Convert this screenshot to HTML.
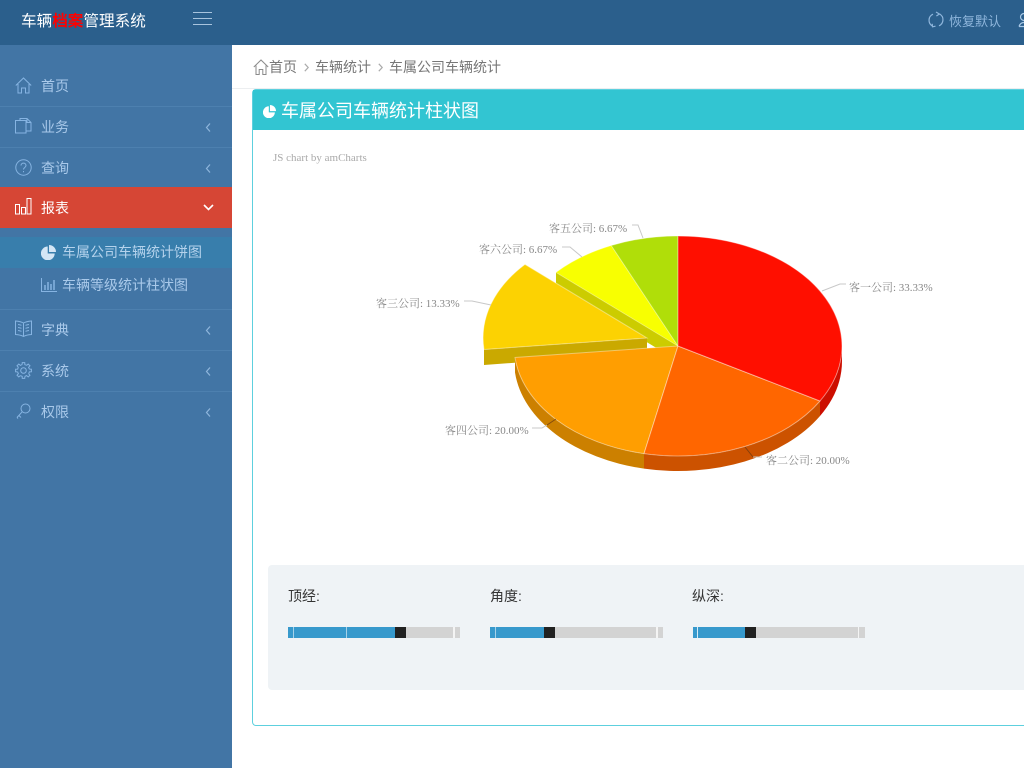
<!DOCTYPE html>
<html lang="zh">
<head>
<meta charset="utf-8">
<title>车辆档案管理系统</title>
<style>
*{box-sizing:border-box}
html,body{margin:0;padding:0;width:1024px;height:768px;overflow:hidden;background:#fff;font-family:"Liberation Sans","WenQuanYi Zen Hei","Noto Sans CJK SC",sans-serif}
.abs{position:absolute;white-space:nowrap}
#top{left:0;top:0;width:1024px;height:45px;background:#2b5f8c}
#side{left:0;top:45px;width:232px;height:723px;background:#4275a5}
.sep{position:absolute;left:0;width:232px;height:1px;background:#4d80af}
.mi{position:absolute;left:41px;font-size:14px;line-height:20px;color:#a9c9ea}
.chev{position:absolute;left:205px}
.ic{position:absolute;fill:none;stroke:#86b4e2;stroke-width:1}
#box{left:252px;top:89px;width:900px;height:637px;border:1px solid #5dd0de;border-radius:4px;background:#fff}
#head{left:253px;top:90px;width:800px;height:40px;background:#32c5d2}
#panel{left:268px;top:565px;width:800px;height:125px;background:#eff3f6;border-radius:4px}
.sl{position:absolute;top:627px;height:11px;background:#d3d3d3}
.sl i{position:absolute;top:0;height:11px;display:block}
.lab{position:absolute;top:586px;font-size:14px;line-height:20px;color:#333}
</style>
</head>
<body>
<div class="abs" id="top"></div>
<div class="abs" style="left:21px;top:12px;font-size:15.6px;line-height:20px;color:#fff">车辆<span style="color:#f00;font-weight:bold">档案</span>管理系统</div>
<div class="abs" style="left:193px;top:12px;width:19px;height:1px;background:#a8c4de"></div>
<div class="abs" style="left:193px;top:18px;width:19px;height:1px;background:#a8c4de"></div>
<div class="abs" style="left:193px;top:24px;width:19px;height:1px;background:#a8c4de"></div>
<svg class="abs" style="left:927px;top:11px" width="18" height="18" viewBox="0 0 18 18" fill="none" stroke="#8fb6dc" stroke-width="1.2"><path d="M6 3.2A6.6 6.6 0 0 0 5.4 15M12 14.8A6.6 6.6 0 0 0 12.6 3"/><path d="M9 1l3.4 2-3 2M5.2 12.8l.3 3 3-.6"/></svg>
<div class="abs" style="left:949px;top:13px;font-size:13px;line-height:18px;color:#8fb6dc">恢复默认</div>
<svg class="abs" style="left:1018px;top:12px" width="10" height="18" viewBox="0 0 10 18" fill="none" stroke="#a8c8e6" stroke-width="1.2"><circle cx="6" cy="5" r="3.5"/><path d="M1 14.5c1-3 3-4 5-4M1 14.500h9"/></svg>

<div class="abs" id="side"></div>
<div class="abs" style="left:0;top:187px;width:232px;height:41px;background:#d64635"></div>
<div class="abs" style="left:0;top:237px;width:232px;height:31px;background:#387eac"></div>
<div class="sep" style="top:106px"></div>
<div class="sep" style="top:147px"></div>
<div class="sep" style="top:309px"></div>
<div class="sep" style="top:350px"></div>
<div class="sep" style="top:391px"></div>

<svg class="ic" style="left:15px;top:77px" width="17" height="17" viewBox="0 0 17 17"><path d="M.8 8.500L8.500 1l7.700 7.500M3 7v9h3.500v-5h4v5H14V7"/></svg>
<div class="mi" style="top:76px">首页</div>

<svg class="ic" style="left:15px;top:118px" width="17" height="17" viewBox="0 0 17 17"><path d="M.5 2.500h10.500v12.500H.5zM5 2.500V.5h7l4 4v8.500h-5M12 .5v4h4"/></svg>
<div class="mi" style="top:117px">业务</div>
<svg class="chev" style="top:123px" width="7" height="9" viewBox="0 0 7 9" fill="none" stroke="#8fb6dc" stroke-width="1.2"><path d="M5 .5L1.500 4.500 5 8.500"/></svg>

<svg class="ic" style="left:15px;top:159px" width="17" height="17" viewBox="0 0 17 17"><circle cx="8.500" cy="8.500" r="7.700"/><path d="M6 6.500c0-3.200 5-3.200 5 0 0 2-2.500 2-2.500 4M8.500 12v1.200"/></svg>
<div class="mi" style="top:158px">查询</div>
<svg class="chev" style="top:164px" width="7" height="9" viewBox="0 0 7 9" fill="none" stroke="#8fb6dc" stroke-width="1.2"><path d="M5 .5L1.500 4.500 5 8.500"/></svg>

<svg class="ic" style="left:15px;top:198px;stroke:#fff" width="17" height="17" viewBox="0 0 17 17"><path d="M.5 6.500h4v9.500h-4zM6.500 9.500h4V16h-4zM12 .5h4V16h-4z"/></svg>
<div class="mi" style="top:198px;color:#fff">报表</div>
<svg class="abs" style="left:203px;top:204px" width="11" height="7" viewBox="0 0 11 7" fill="none" stroke="#fff" stroke-width="1.600"><path d="M1 1l4.500 4.500L10 1"/></svg>

<svg class="abs" style="left:41px;top:245px" width="15" height="15" viewBox="0 0 15 15"><path fill="#d4e6f5" d="M6.700 1.500v7h7A6.900 6.900 0 1 1 6.700 1.500zM8 0a7 7 0 0 1 7 7H8z"/></svg>
<div class="mi" style="left:62px;top:242px;color:#b4d2ec">车属公司车辆统计饼图</div>
<svg class="abs" style="left:41px;top:278px" width="16" height="14" viewBox="0 0 16 14" fill="none" stroke="#86b4e2"><path d="M.5 0v13.500H16"/><path stroke-width="1.500" d="M4 12V7M7 12V4M10 12V6M13 12V2"/></svg>
<div class="mi" style="left:62px;top:275px;color:#a9c9ea">车辆等级统计柱状图</div>

<svg class="ic" style="left:15px;top:320px" width="17" height="17" viewBox="0 0 17 17"><path d="M8.500 3C6 1.500 3 1.200.5 1v13.500c3 .2 5.500.5 8 2 2.500-1.500 5-1.800 8-2V1c-2.500.2-5.500.5-8 2zM8.500 3v13.500M3 4.500c1 0 2 .3 3.500.8M3 7.500c1 0 2 .3 3.500.8M3 10.500c1 0 2 .3 3.500.8M14 4.500c-1 0-2 .3-3.500.8M14 7.500c-1 0-2 .3-3.500.8M14 10.500c-1 0-2 .3-3.500.8"/></svg>
<div class="mi" style="top:320px">字典</div>
<svg class="chev" style="top:326px" width="7" height="9" viewBox="0 0 7 9" fill="none" stroke="#8fb6dc" stroke-width="1.2"><path d="M5 .5L1.500 4.500 5 8.500"/></svg>

<svg class="ic" style="left:15px;top:362px" width="17" height="17" viewBox="0 0 17 17"><circle cx="8.500" cy="8.500" r="2.800"/>
<g><path id="t" d="M14.350 7.150L16.400 7.250V9.750L14.350 9.850A6 6 0 0 1 13.590 11.680"/>
<path transform="rotate(45 8.500 8.500)" d="M14.350 7.150L16.400 7.250V9.750L14.350 9.850A6 6 0 0 1 13.590 11.680"/>
<path transform="rotate(90 8.500 8.500)" d="M14.350 7.150L16.400 7.250V9.750L14.350 9.850A6 6 0 0 1 13.590 11.680"/>
<path transform="rotate(135 8.500 8.500)" d="M14.350 7.150L16.400 7.250V9.750L14.350 9.850A6 6 0 0 1 13.590 11.680"/>
<path transform="rotate(180 8.500 8.500)" d="M14.350 7.150L16.400 7.250V9.750L14.350 9.850A6 6 0 0 1 13.590 11.680"/>
<path transform="rotate(225 8.500 8.500)" d="M14.350 7.150L16.400 7.250V9.750L14.350 9.850A6 6 0 0 1 13.590 11.680"/>
<path transform="rotate(270 8.500 8.500)" d="M14.350 7.150L16.400 7.250V9.750L14.350 9.850A6 6 0 0 1 13.590 11.680"/>
<path transform="rotate(315 8.500 8.500)" d="M14.350 7.150L16.400 7.250V9.750L14.350 9.850A6 6 0 0 1 13.590 11.680"/></g></svg>
<div class="mi" style="top:361px">系统</div>
<svg class="chev" style="top:367px" width="7" height="9" viewBox="0 0 7 9" fill="none" stroke="#8fb6dc" stroke-width="1.2"><path d="M5 .5L1.500 4.500 5 8.500"/></svg>

<svg class="ic" style="left:16px;top:403px" width="16" height="17" viewBox="0 0 16 17"><circle cx="9.500" cy="5.500" r="4.500"/><path d="M6.300 8.700L1 14.500M3 12.500l2 2M1 14.500l1 1"/></svg>
<div class="mi" style="top:402px">权限</div>
<svg class="chev" style="top:408px" width="7" height="9" viewBox="0 0 7 9" fill="none" stroke="#8fb6dc" stroke-width="1.2"><path d="M5 .5L1.500 4.500 5 8.500"/></svg>

<div class="abs" style="left:232px;top:88px;width:792px;height:1px;background:#eceef0"></div>
<svg class="abs" style="left:253px;top:59px" width="16" height="16" viewBox="0 0 16 16" fill="none" stroke="#8a8a8a"><path d="M.8 8L8 1l7.200 7M3 6.500v9h3.200v-5h3.600v5H13v-9"/></svg>
<div class="abs" style="left:269px;top:57px;font-size:14px;line-height:20px;color:#777">首页</div>
<svg class="abs" style="left:304px;top:63px" width="5" height="9" viewBox="0 0 5 9" fill="none" stroke="#aaa" stroke-width="1.200"><path d="M.8.800l3.400 3.700-3.400 3.700"/></svg>
<div class="abs" style="left:315px;top:57px;font-size:14px;line-height:20px;color:#777">车辆统计</div>
<svg class="abs" style="left:378px;top:63px" width="5" height="9" viewBox="0 0 5 9" fill="none" stroke="#aaa" stroke-width="1.200"><path d="M.8.800l3.400 3.700-3.400 3.700"/></svg>
<div class="abs" style="left:389px;top:57px;font-size:14px;line-height:20px;color:#777">车属公司车辆统计</div>

<div class="abs" id="box"></div>
<div class="abs" id="head"></div>
<svg class="abs" style="left:263px;top:105px" width="13" height="13" viewBox="0 0 15 15"><path fill="#fff" d="M6.700 1.500v7h7A6.900 6.900 0 1 1 6.700 1.500zM8 0a7 7 0 0 1 7 7H8z"/></svg>
<div class="abs" style="left:281px;top:99px;font-size:18px;line-height:24px;color:#fff">车属公司车辆统计柱状图</div>
<div class="abs" style="left:273px;top:151px;font:11px/14px 'Liberation Serif',serif;color:#aaa">JS chart by amCharts</div>

<svg class="abs" style="left:0;top:0" width="1024" height="768" viewBox="0 0 1024 768">
<!-- yellow -->
<path fill="#cccc00" d="M556 272.400L678 346V361L556 287.400Z"/>
<path fill="#f8ff01" stroke="#fff" stroke-opacity=".3" d="M678 346L556 272.400A164 110 0 0 1 611.300 245.500Z"/>
<!-- lime -->
<path fill="#b0de09" stroke="#fff" stroke-opacity=".3" d="M678 346L611.300 245.500A164 110 0 0 1 678 236Z"/>
<!-- gold -->
<path fill="#caa900" d="M647 338L484 349.500V365L647 353Z"/>
<path fill="#fcd202" stroke="#fff" stroke-opacity=".4" d="M647 338L484 349.500A164 110 0 0 1 525 264.400Z"/>
<!-- walls -->
<path fill="#cc8000" d="M515 357.500A164 110 0 0 0 644 453.600V468.600A164 110 0 0 1 515 372.500Z"/>
<path fill="#cc5200" d="M644 453.600A164 110 0 0 0 820 401V416A164 110 0 0 1 644 468.600Z"/>
<path fill="#cc0e00" d="M820 401A164 110 0 0 0 842 346V361A164 110 0 0 1 820 416Z"/>
<!-- tops -->
<path fill="#ff9e01" stroke="#fff" stroke-opacity=".4" d="M678 346L644 453.600A164 110 0 0 1 515 357.500Z"/>
<path fill="#ff6600" stroke="#fff" stroke-opacity=".4" d="M678 346L820 401A164 110 0 0 1 644 453.600Z"/>
<path fill="#ff0f00" stroke="#fff" stroke-opacity=".4" d="M678 346V236A164 110 0 0 1 820 401Z"/>
<!-- leader lines -->
<g fill="none" stroke="#c8c8c8">
<path d="M822 291L840 284H846M753 457H762"/>
<path d="M547 425L542 428H532M491 305L472 301H464M582 257L570 247H562M643 238L638 225H632"/>
</g>
<path fill="none" stroke="#6b3a12" stroke-opacity=".75" d="M745 447L753 457M556 419L547 425"/>
<g font-family="'Liberation Serif','WenQuanYi Zen Hei','Noto Serif CJK SC',serif" font-size="11" fill="#888">
<text x="849" y="291">客一公司: 33.33%</text>
<text x="766" y="464">客二公司: 20.00%</text>
<text x="445" y="434">客四公司: 20.00%</text>
<text x="376" y="307">客三公司: 13.33%</text>
<text x="479" y="253">客六公司: 6.67%</text>
<text x="549" y="232">客五公司: 6.67%</text>
</g>
</svg>

<div class="abs" id="panel"></div>
<div class="lab" style="left:288px">顶经:</div>
<div class="lab" style="left:490px">角度:</div>
<div class="lab" style="left:692px">纵深:</div>

<div class="sl" style="left:288px;width:172px">
<i style="left:0;width:107px;background:#3799cc"></i>
<i style="left:5px;width:1px;background:#a6d2ea"></i>
<i style="left:58px;width:1px;background:#a6d2ea"></i>
<i style="left:107px;width:11px;background:#212121"></i>
<i style="left:165px;width:2px;background:#f4f4f4"></i>
</div>
<div class="sl" style="left:490px;width:173px">
<i style="left:0;width:54px;background:#3799cc"></i>
<i style="left:5px;width:1px;background:#a6d2ea"></i>
<i style="left:54px;width:11px;background:#212121"></i>
<i style="left:166px;width:2px;background:#f4f4f4"></i>
</div>
<div class="sl" style="left:693px;width:172px">
<i style="left:0;width:52px;background:#3799cc"></i>
<i style="left:4px;width:1px;background:#d6ecf7"></i>
<i style="left:52px;width:11px;background:#212121"></i>
<i style="left:165px;width:1px;background:#f4f4f4"></i>
</div>
</body>
</html>
